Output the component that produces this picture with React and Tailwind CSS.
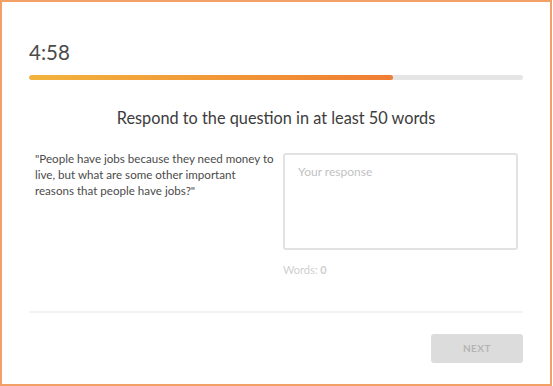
export default function App() {
  return (
    <div className="w-[553px] h-[386px] bg-white" style={{ fontFamily: 'Lato, "Open Sans", sans-serif' }}>
      <div className="w-[552px] h-[386px] border-2 border-[#f2a066] px-[27px] flex flex-col">
        <div className="mt-[38px] text-[20.5px] leading-[25px] text-[#4b4b4b]">4:58</div>
        <div className="mt-[10px] h-[5px] w-full rounded-full bg-[#e5e5e5] overflow-hidden">
          <div className="h-full w-[73.6%] rounded-full bg-gradient-to-r from-[#f2b33d] to-[#ef7d33]" />
        </div>
        <div className="mt-[27px] text-center text-[16.3px] leading-[22px] text-[#3c3c3c]">
          Respond to the question in at least 50 words
        </div>
        <div className="mt-[24px] flex">
          <div className="w-[252px] -mt-[2px] pl-[6px] text-[11.6px] leading-[16px] text-[#4b4b4b] whitespace-nowrap">
            "People have jobs because they need money to
            <br />
            live, but what are some other important
            <br />
            reasons that people have jobs?"
          </div>
          <div className="ml-[2px] flex flex-col">
            <div className="w-[235px] h-[97px] rounded-[3px] border-2 border-[#e2e2e2] px-[13px] pt-[8px] text-[12px] text-[#c2c2c2]">
              Your response
            </div>
            <div className="mt-[13px] text-[11px] leading-[14px] text-[#cfcfcf]">
              Words: <span className="font-bold">0</span>
            </div>
          </div>
        </div>
        <div className="mt-[34px] h-[2px] w-full bg-[#f2f2f2]" />
        <div className="mt-[21px] flex justify-end">
          <div className="w-[92px] h-[29px] rounded-[3px] bg-[#dcdcdc] flex items-center justify-center text-[10px] font-bold tracking-[0.5px] text-[#b4b4b4]">
            NEXT
          </div>
        </div>
      </div>
    </div>
  );
}
